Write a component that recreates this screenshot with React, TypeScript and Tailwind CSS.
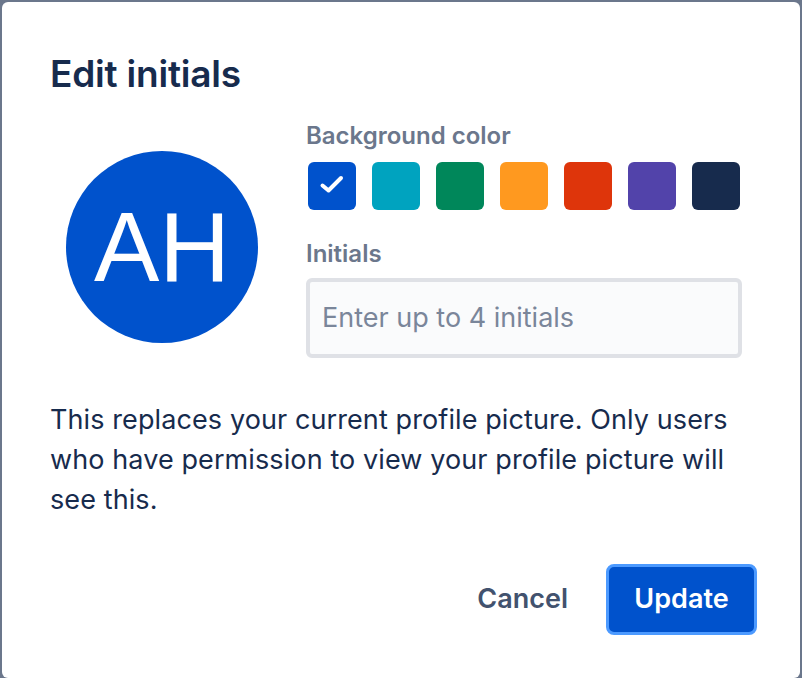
import React from "react";

const swatches = ["#0052CC", "#00A3BF", "#00875A", "#FF991F", "#DE350B", "#5243AA", "#172B4D"];

export default function App() {
  return (
    <div className="w-[802px] h-[678px] bg-[#6b778c] pt-[2px] pl-[2px] overflow-hidden font-['Inter','Noto_Sans',sans-serif]">
      <div className="w-[798px] h-[676px] bg-white rounded-[6px] pt-[52px] pl-[48px] pr-[43px] flex flex-col">
        <h2 className="text-[37px] leading-[40px] font-semibold text-[#172B4D] tracking-[-0.2px]">Edit initials</h2>

        <div className="mt-[26px] flex">
          <div className="w-[256px] shrink-0 pl-[16px] pt-[31px]">
            <div className="w-[192px] h-[192px] rounded-full bg-[#0052CC] flex items-center justify-center">
              <span className="text-white text-[98px] leading-none font-['Liberation_Sans',Arial,sans-serif]">AH</span>
            </div>
          </div>

          <div className="w-[436px] flex flex-col">
            <label className="text-[24px] leading-[32px] font-semibold text-[#6B778C]">Background color</label>
            <div className="mt-[8px] flex gap-[12px]">
              {swatches.map((c, i) => (
                <button key={c} className="w-[52px] h-[52px] p-[2px] shrink-0">
                  <span
                    className="w-[48px] h-[48px] rounded-[6px] flex items-center justify-center"
                    style={{ backgroundColor: c }}
                  >
                    {i === 0 && (
                      <svg width="48" height="48" viewBox="0 0 48 48" fill="none">
                        <path d="M14.5 23.5 L20.5 28.5 L33 16" stroke="white" strokeWidth="4" strokeLinecap="round" strokeLinejoin="round" />
                      </svg>
                    )}
                  </span>
                </button>
              ))}
            </div>
            <label className="mt-[26px] text-[24px] leading-[32px] font-semibold text-[#6B778C]">Initials</label>
            <input
              className="mt-[8px] w-[436px] h-[80px] border-[4px] border-[#DFE1E6] bg-[#FAFBFC] rounded-[6px] px-[12px] pt-[15px] pb-[17px] text-[27px] leading-[40px] text-[#172B4D] placeholder:text-[#7A869A] outline-none"
              placeholder="Enter up to 4 initials"
            />
          </div>
        </div>

        <p className="mt-[42px] text-[27px] leading-[40px] text-[#172B4D] tracking-[0.1px]">
          This replaces your current profile picture. Only users who have permission to view your profile picture will see this.
        </p>

        <div className="mt-[44px] flex justify-end items-center gap-[14px]">
          <button className="h-[71px] px-[24px] text-[27px] font-semibold text-[#42526E]">Cancel</button>
          <button className="w-[151px] h-[71px] rounded-[8px] border-[3px] border-[#4C9AFF] bg-[#0052CC] text-white text-[27px] font-semibold">
            Update
          </button>
        </div>
      </div>
    </div>
  );
}
